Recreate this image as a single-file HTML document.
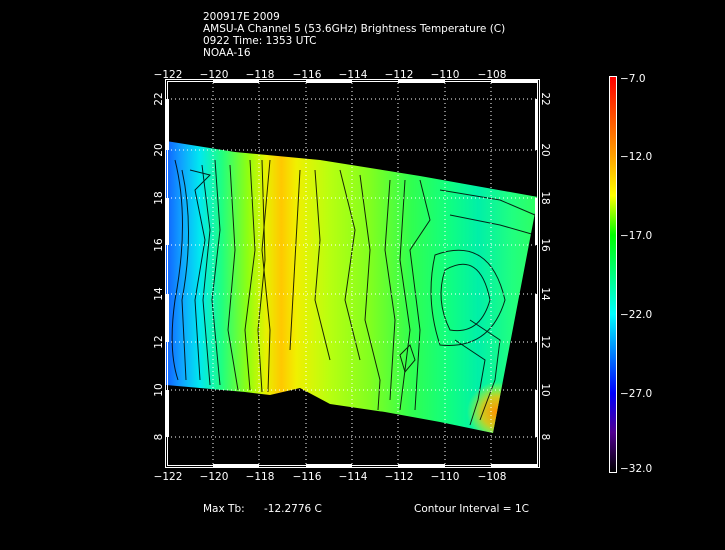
<!DOCTYPE html>
<html><head><meta charset="utf-8"><style>
html,body{margin:0;padding:0;background:#000;width:725px;height:550px;overflow:hidden}
svg{display:block}
text{font-family:"DejaVu Sans","Liberation Sans",sans-serif;fill:#fff;font-size:10.5px}
</style></head><body>
<svg width="725" height="550" viewBox="0 0 725 550">
<defs>
<linearGradient id="g" x1="166" y1="0" x2="538" y2="0" gradientUnits="userSpaceOnUse">
<stop offset="0" stop-color="#1060ff"/>
<stop offset="0.04" stop-color="#10a0ff"/>
<stop offset="0.09" stop-color="#00e8f0"/>
<stop offset="0.15" stop-color="#20ff80"/>
<stop offset="0.22" stop-color="#90ff10"/>
<stop offset="0.27" stop-color="#e8f000"/>
<stop offset="0.31" stop-color="#ffc800"/>
<stop offset="0.35" stop-color="#f0f000"/>
<stop offset="0.44" stop-color="#b8ff10"/>
<stop offset="0.55" stop-color="#80ff20"/>
<stop offset="0.66" stop-color="#30ff50"/>
<stop offset="0.76" stop-color="#10ff80"/>
<stop offset="0.84" stop-color="#00f0a8"/>
<stop offset="0.93" stop-color="#20ff80"/>
<stop offset="1" stop-color="#30ff60"/>
</linearGradient>
<radialGradient id="o" cx="497" cy="412" r="30" gradientUnits="userSpaceOnUse">
<stop offset="0" stop-color="#ff9000"/><stop offset="0.5" stop-color="#ffc000" stop-opacity="0.8"/><stop offset="1" stop-color="#ffff00" stop-opacity="0"/>
</radialGradient>
<clipPath id="cp"><polygon points="166,141 235,152 320,160 420,176 538,197 493,433 440,422 385,412 330,404 300,388 270,395 245,392 166,385"/></clipPath>
<linearGradient id="cb" x1="0" y1="77" x2="0" y2="472" gradientUnits="userSpaceOnUse">
<stop offset="0" stop-color="#ff0000"/>
<stop offset="0.2" stop-color="#ffa000"/>
<stop offset="0.3" stop-color="#ffff00"/>
<stop offset="0.4" stop-color="#00ff00"/>
<stop offset="0.6" stop-color="#00ffff"/>
<stop offset="0.8" stop-color="#0000ff"/>
<stop offset="0.9" stop-color="#500090"/>
<stop offset="1" stop-color="#000000"/>
</linearGradient>
</defs>
<text x="203" y="20">200917E 2009</text>
<text x="203" y="32">AMSU-A Channel 5 (53.6GHz) Brightness Temperature (C)</text>
<text x="203" y="44">0922 Time: 1353 UTC</text>
<text x="203" y="56">NOAA-16</text>
<g clip-path="url(#cp)">
<rect x="166" y="140" width="373" height="300" fill="url(#g)"/>
<rect x="440" y="360" width="100" height="80" fill="url(#o)"/>
<g stroke="#000" stroke-width="1" fill="none" opacity="0.85">
<path d="M175,160 Q190,220 175,300 Q168,350 178,380"/>
<path d="M182,170 Q195,230 182,300 L186,380"/>
<path d="M190,170 L210,175 L195,190 L205,240 L195,300 L200,380"/>
<path d="M202,165 L210,230 L203,300 L210,385"/>
<path d="M215,160 L220,230 L212,300 L220,385"/>
<path d="M230,165 L235,250 L228,330 L238,390"/>
<path d="M250,160 L255,250 L245,330 L250,390"/>
<path d="M262,160 L265,260 L258,330 L262,392"/>
<path d="M270,160 L262,250 L270,330 L268,392"/>
<path d="M300,170 L295,260 L290,350"/>
<path d="M315,170 L320,240 L315,300 L330,360"/>
<path d="M340,170 L355,230 L345,300 L360,360"/>
<path d="M360,175 L370,250 L365,320 L380,380 L378,410"/>
<path d="M390,180 L385,250 L395,320 L390,400"/>
<path d="M405,180 L400,260 L410,330 L400,410"/>
<path d="M420,180 L430,220 L410,250 L420,330 L415,410"/>
<path d="M445,270 Q480,250 490,300 Q480,335 450,330 Q435,300 445,270Z"/>
<path d="M435,255 Q490,235 505,300 Q490,350 440,345 Q425,300 435,255Z"/>
<path d="M440,190 L500,200 L535,215"/>
<path d="M450,215 L500,225 L535,235"/>
<path d="M400,355 L410,345 L415,360 L405,372Z"/>
<path d="M470,320 L500,340 L495,380 L480,420"/>
<path d="M455,340 L485,360 L478,400 L470,425"/>
</g>
</g>
<g stroke="#fff" stroke-width="1" stroke-dasharray="1,3">
<path d="M213,83V467M259,83V467M306,83V467M352,83V467M398,83V467M445,83V467M491,83V467"/>
<path d="M167,99H537M167,150H537M167,198H537M167,245H537M167,294H537M167,342H537M167,390H537M167,437H537"/>
</g>
<rect x="165.5" y="79.5" width="374" height="388" fill="none" stroke="#fff" stroke-width="1"/>
<rect x="167.5" y="81.5" width="370" height="384" fill="none" stroke="#fff" stroke-width="1"/>
<g fill="#fff">
<rect x="213" y="80" width="46" height="3"/><rect x="306" y="80" width="46" height="3"/><rect x="398" y="80" width="47" height="3"/><rect x="491" y="80" width="47" height="3"/>
<rect x="213" y="464" width="46" height="3"/><rect x="306" y="464" width="46" height="3"/><rect x="398" y="464" width="47" height="3"/><rect x="491" y="464" width="47" height="3"/>
<rect x="535" y="99" width="3" height="51"/><rect x="535" y="198" width="3" height="47"/><rect x="535" y="294" width="3" height="48"/><rect x="535" y="390" width="3" height="47"/>
<rect x="166" y="99" width="3" height="51"/><rect x="166" y="198" width="3" height="47"/><rect x="166" y="294" width="3" height="48"/><rect x="166" y="390" width="3" height="47"/>
</g>
<g text-anchor="middle">
<text x="168" y="78">−122</text><text x="214" y="78">−120</text><text x="260" y="78">−118</text><text x="307" y="78">−116</text><text x="353" y="78">−114</text><text x="399" y="78">−112</text><text x="445" y="78">−110</text><text x="492" y="78">−108</text>
<text x="168" y="480">−122</text><text x="214" y="480">−120</text><text x="260" y="480">−118</text><text x="307" y="480">−116</text><text x="353" y="480">−114</text><text x="399" y="480">−112</text><text x="445" y="480">−110</text><text x="492" y="480">−108</text>
</g>
<g text-anchor="middle">
<text transform="translate(162,99) rotate(-90)">22</text><text transform="translate(162,150) rotate(-90)">20</text><text transform="translate(162,198) rotate(-90)">18</text><text transform="translate(162,245) rotate(-90)">16</text><text transform="translate(162,294) rotate(-90)">14</text><text transform="translate(162,342) rotate(-90)">12</text><text transform="translate(162,390) rotate(-90)">10</text><text transform="translate(162,437) rotate(-90)">8</text>
<text transform="translate(542,99) rotate(90)">22</text><text transform="translate(542,150) rotate(90)">20</text><text transform="translate(542,198) rotate(90)">18</text><text transform="translate(542,245) rotate(90)">16</text><text transform="translate(542,294) rotate(90)">14</text><text transform="translate(542,342) rotate(90)">12</text><text transform="translate(542,390) rotate(90)">10</text><text transform="translate(542,437) rotate(90)">8</text>
</g>
<rect x="609.5" y="76.5" width="7" height="396" fill="url(#cb)" stroke="#fff" stroke-width="1"/>
<text x="620" y="82">−7.0</text>
<text x="620" y="160">−12.0</text>
<text x="620" y="239">−17.0</text>
<text x="620" y="318">−22.0</text>
<text x="620" y="397">−27.0</text>
<text x="620" y="472">−32.0</text>
<text x="203" y="512">Max Tb:</text>
<text x="264" y="512">-12.2776  C</text>
<text x="414" y="512">Contour Interval = 1C</text>
</svg>
</body></html>
